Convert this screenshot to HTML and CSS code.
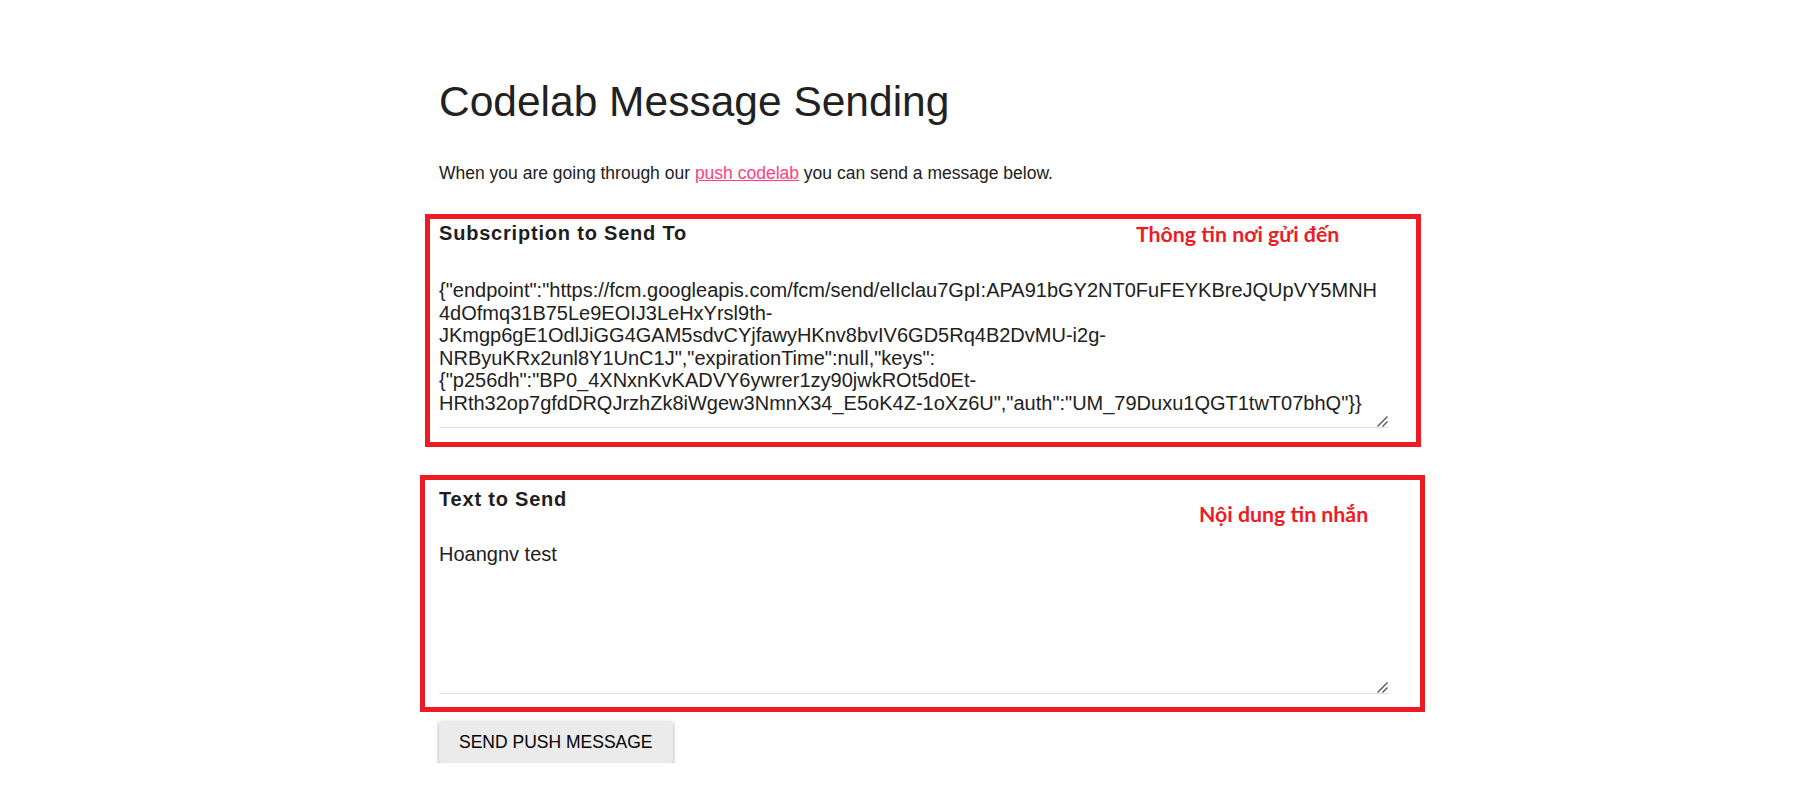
FILE: index.html
```html
<!DOCTYPE html>
<html lang="en">
<head>
<meta charset="utf-8">
<title>Codelab Message Sending</title>
<link rel="stylesheet" href="styles.css">
</head>
<body>
<main class="page">
  <h1 class="title">Codelab Message Sending</h1>
  <p class="intro">When you are going through our <a class="link" href="#">push codelab</a> you can send a message below.</p>

  <section class="frame frame-sub">
    <h2 class="label">Subscription to Send To</h2>
    <div class="field-wrap">
      <textarea class="field">{"endpoint":"https://fcm.googleapis.com/fcm/send/elIclau7GpI:APA91bGY2NT0FuFEYKBreJQUpVY5MNH
4dOfmq31B75Le9EOIJ3LeHxYrsl9th-
JKmgp6gE1OdlJiGG4GAM5sdvCYjfawyHKnv8bvIV6GD5Rq4B2DvMU-i2g-
NRByuKRx2unl8Y1UnC1J","expirationTime":null,"keys":
{"p256dh":"BP0_4XNxnKvKADVY6ywrer1zy90jwkROt5d0Et-
HRth32op7gfdDRQJrzhZk8iWgew3NmnX34_E5oK4Z-1oXz6U","auth":"UM_79Duxu1QGT1twT07bhQ"}}</textarea>
      <svg class="grip" width="12" height="12" viewBox="0 0 12 12" aria-hidden="true"><path d="M1.5 11.5 L11.5 1.5 M6.5 11.5 L11.5 6.5" stroke="#555" stroke-width="1.4" fill="none"/></svg>
    </div>
    <span class="note note-sub">Thông tin nơi gửi đến</span>
  </section>

  <section class="frame frame-text">
    <h2 class="label">Text to Send</h2>
    <div class="field-wrap">
      <textarea class="field field-tall">Hoangnv test</textarea>
      <svg class="grip" width="12" height="12" viewBox="0 0 12 12" aria-hidden="true"><path d="M1.5 11.5 L11.5 1.5 M6.5 11.5 L11.5 6.5" stroke="#555" stroke-width="1.4" fill="none"/></svg>
    </div>
    <span class="note note-text">Nội dung tin nhắn</span>
  </section>

  <button class="send-btn" type="button">Send push message</button>
</main>
</body>
</html>
```

FILE: styles.css
```css
html, body {
  margin: 0;
  padding: 0;
  background: #ffffff;
}

body {
  font-family: "Liberation Sans", Arial, Helvetica, sans-serif;
  color: #212121;
}

.page {
  width: 950px;
  margin: 0 auto;
  padding: 78px 0 0 16px;
}

.title {
  margin: 0 0 37px;
  font-size: 42.5px;
  line-height: 48px;
  font-weight: 400;
  color: #212121;
}

.intro {
  margin: 0 0 30px;
  font-size: 17.5px;
  line-height: 21px;
  color: #212121;
}

.link {
  color: #ff4081;
  text-decoration: underline;
}

.frame {
  position: relative;
  border: 5px solid #ed1c24;
}

.frame-sub {
  margin: 0 -32px 0 -14px;
  padding: 2px 27px 14px 9px;
}

.frame-text {
  margin: 28px -36px 0 -19px;
  padding: 7px 31px 13px 14px;
}

.label {
  margin: 0 0 29px;
  font-size: 20px;
  line-height: 24px;
  font-weight: 700;
  letter-spacing: 0.8px;
  color: #1e1e1e;
}

.frame-text .label {
  margin-bottom: 27px;
}

.field-wrap {
  position: relative;
}

.field {
  display: block;
  box-sizing: border-box;
  width: 100%;
  height: 154px;
  margin: 0;
  padding: 5px 0;
  border: none;
  border-bottom: 1px solid rgba(0, 0, 0, 0.12);
  background: transparent;
  font-family: "Liberation Sans", Arial, Helvetica, sans-serif;
  font-size: 20px;
  line-height: 22.5px;
  color: #212121;
  outline: none;
  overflow: hidden;
  resize: none;
}

.field-tall {
  height: 156px;
}

.grip {
  position: absolute;
  right: 1px;
  bottom: 1px;
  display: block;
}

.note {
  position: absolute;
  font-family: Lato, "Noto Sans", sans-serif;
  font-weight: 700;
  font-size: 21.3px;
  line-height: 21px;
  color: #ed1c24;
  white-space: nowrap;
}

.note-sub {
  left: 706px;
  top: 5px;
}

.note-text {
  left: 774px;
  top: 24px;
}

.send-btn {
  display: block;
  margin: 9px 0 0;
  height: 42px;
  padding: 0 20px;
  border: none;
  border-radius: 2.5px;
  background: #ebebeb;
  font-family: "Liberation Sans", Arial, Helvetica, sans-serif;
  font-size: 17.5px;
  text-transform: uppercase;
  color: #000000;
  box-shadow: 0 2px 3px 0 rgba(0, 0, 0, 0.3), 0 3px 1px -2px rgba(0, 0, 0, 0.25), 0 1px 5px 0 rgba(0, 0, 0, 0.14);
  cursor: pointer;
}
```
